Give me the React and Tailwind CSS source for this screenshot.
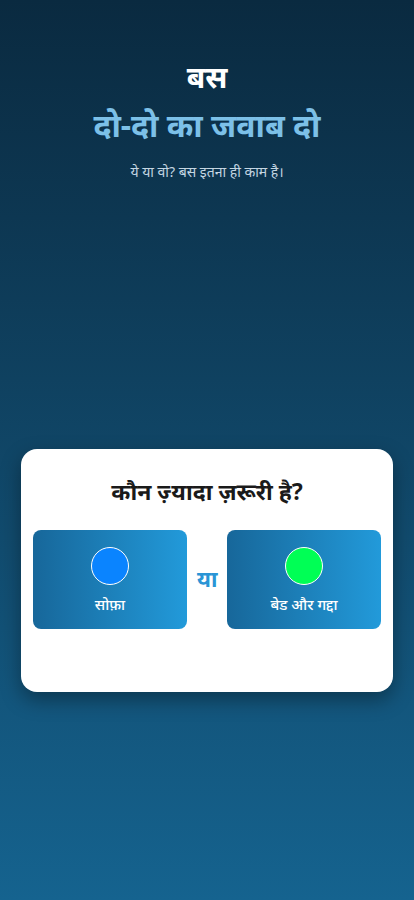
const font = { fontFamily: '"Noto Sans", "Noto Sans Devanagari", "Lato", sans-serif' };

function Option({ color, label }) {
  return (
    <button className="flex-1 h-[99px] rounded-lg bg-gradient-to-r from-[#17679a] to-[#229ada] flex flex-col items-center justify-center gap-[9px] pt-[2px]">
      <span
        className="block w-[38px] h-[38px] rounded-full border-[1.5px] border-white"
        style={{ background: color }}
      />
      <span className="text-white text-[15px] font-medium leading-5">{label}</span>
    </button>
  );
}

export default function App() {
  return (
    <div
      className="w-[414px] h-[900px] bg-gradient-to-b from-[#0a2a40] to-[#15638f] flex flex-col items-center overflow-hidden"
      style={font}
    >
      {/* Header */}
      <div className="pt-[57px] flex flex-col items-center text-center">
        <h1 className="text-white text-[30px] font-bold leading-[40px]">बस</h1>
        <h2 className="text-[#7cc0e8] text-[32px] font-bold leading-[44px] mt-[6px]">दो-दो का जवाब दो</h2>
        <p className="text-[#c4d6e2] text-[14px] leading-5 mt-[15px]">ये या वो? बस इतना ही काम है।</p>
      </div>

      {/* Question card */}
      <div className="mt-[267px] w-[372px] h-[243px] bg-white rounded-2xl shadow-[0_8px_20px_rgba(0,0,0,0.35)] px-3 pt-[26px]">
        <p className="text-center text-[#1a1a1a] text-[23px] font-bold leading-8">कौन ज़्यादा ज़रूरी है?</p>
        <div className="mt-[23px] flex items-center gap-[10px]">
          <Option color="#0a84ff" label="सोफ़ा" />
          <span className="text-[#2a95d6] text-[22px] font-bold w-[20px] text-center mt-[-2px]">या</span>
          <Option color="#00ff55" label="बेड और गद्दा" />
        </div>
      </div>
    </div>
  );
}
